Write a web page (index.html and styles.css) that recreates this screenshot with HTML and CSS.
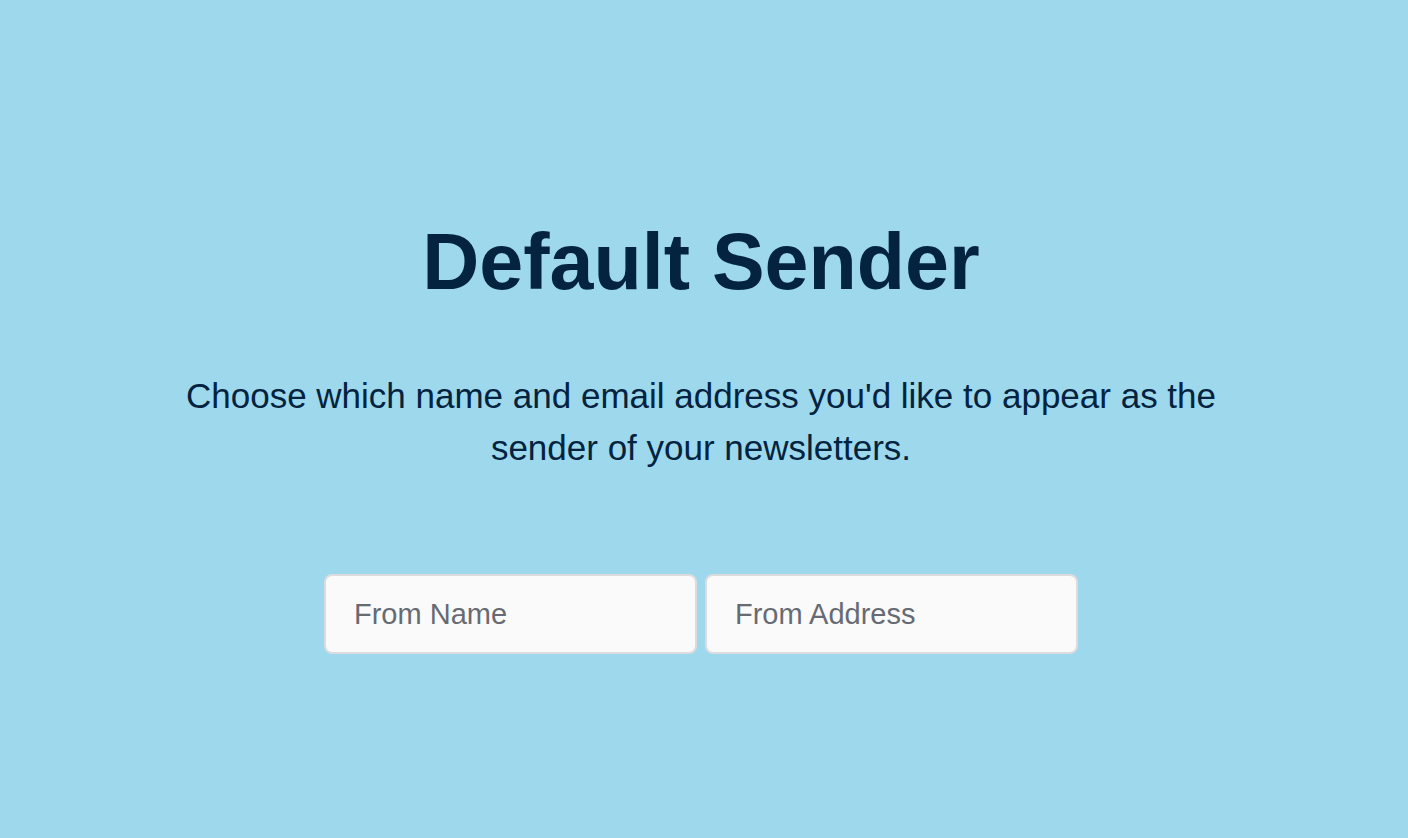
FILE: index.html
```html
<!DOCTYPE html>
<html lang="en">
<head>
<meta charset="utf-8">
<meta name="viewport" content="width=device-width, initial-scale=1">
<title>Default Sender</title>
<link rel="stylesheet" href="styles.css">
</head>
<body>
<main class="sender">
  <h1 class="sender-title">Default Sender</h1>
  <p class="sender-text">Choose which name and email address you'd like to appear as the sender of your newsletters.</p>
  <form class="sender-form">
    <input class="field" type="text" name="name" placeholder="From Name" aria-label="From Name">
    <input class="field" type="email" name="address" placeholder="From Address" aria-label="From Address">
  </form>
</main>
</body>
</html>
```
FILE: styles.css
```css
* {
  box-sizing: border-box;
}

body {
  margin: 0;
  min-height: 100vh;
  background: #9ed8ed;
  color: #03233f;
  font-family: "Liberation Sans", Arial, sans-serif;
}

.sender {
  display: flex;
  flex-direction: column;
  align-items: center;
  padding: 212px 6px 0 0;
}

.sender-title {
  margin: 0;
  font-size: 79px;
  line-height: 100px;
  font-weight: 700;
}

.sender-text {
  max-width: 1080px;
  margin: 58px 0 0;
  font-size: 35px;
  line-height: 52px;
  text-align: center;
}

.sender-form {
  display: flex;
  gap: 8px;
  width: 100%;
  max-width: 754px;
  margin-top: 100px;
}

.field {
  flex: 1;
  min-width: 0;
  padding: 20px 28px;
  border: 2px solid #dcdcde;
  border-radius: 8px;
  background: #fafafa;
  color: #03233f;
  font-family: inherit;
  font-size: 29px;
  line-height: 36px;
  height: 80px;
}

.field::placeholder {
  color: #666b73;
  opacity: 1;
}
```
